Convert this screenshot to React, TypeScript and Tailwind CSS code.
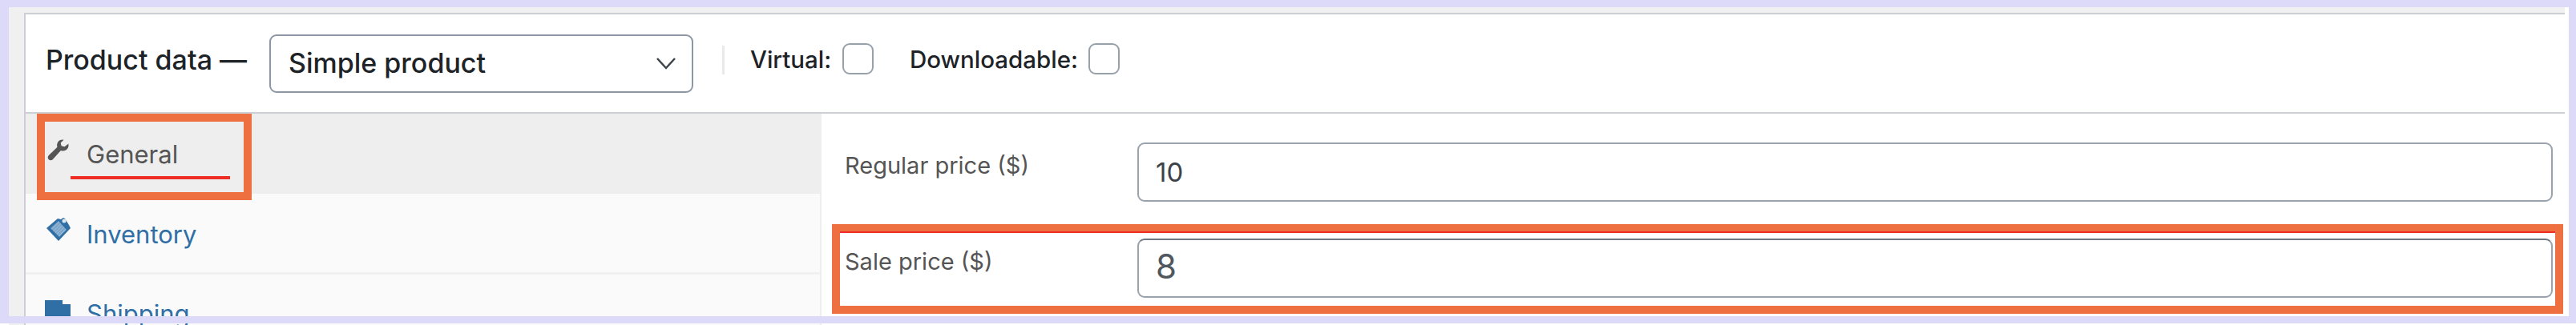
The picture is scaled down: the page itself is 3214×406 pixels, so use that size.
const sideRowText = "text-[31px] leading-none";

function WrenchIcon() {
  return (
    <svg width="28" height="28" viewBox="0 0 28 28" className="shrink-0">
      <path
        d="M27.500 6.500c.4 3.200-1 5.900-3.700 7.300-2 1-4.100 1-5.900.2L8 25c-1.400 1.500-3.800 1.600-5.200.2-1.500-1.400-1.400-3.800.1-5.200L13.500 9.700c-.7-2.100-.5-4.200.6-6C15.600 1.300 18.500.1 21.500.7l-3.800 3.900.9 3.700 3.900 1 5-3.800z"
        fill="#555"
      />
    </svg>
  );
}

function TagIcon() {
  return (
    <svg width="32" height="32" viewBox="0 0 32 32" className="shrink-0">
      <defs>
        <pattern id="tag-grid" width="3" height="3" patternUnits="userSpaceOnUse" patternTransform="rotate(45)">
          <rect width="3" height="3" fill="#8fb3d3" />
          <rect width="1" height="3" fill="#6f9cc4" />
        </pattern>
      </defs>
      <path d="M1 15L15 3l4 1 3-2 2 1 5 8 2 4-15 16z" fill="#2f6fa5" />
      <path d="M6 15l10-9 10 11-9 9z" fill="url(#tag-grid)" />
      <circle cx="23" cy="6" r="2.500" fill="#dbe7f1" />
    </svg>
  );
}

function BoxIcon() {
  return (
    <svg width="32" height="32" viewBox="0 0 32 32" className="shrink-0">
      <path d="M0 0h22v5h10v24H0z" fill="#2f6fa5" />
    </svg>
  );
}

function Checkbox() {
  return <span className="block h-[39px] w-[39px] shrink-0 rounded-[9px] border-2 border-[#98a1aa] bg-white" />;
}

function PriceRow({ label, value, large }: { label: string; value: string; large?: boolean }) {
  return (
    <div className="flex items-start">
      <label className="w-[365px] shrink-0 pt-[9px] text-[29px] leading-[40px] text-[#555]">{label}</label>
      <input
        readOnly
        value={value}
        className={
          large
            ? "h-[74px] flex-1 rounded-[9px] border-2 border-[#9aa3ad] border-t-[#6d7883] bg-white px-[21px] pb-[6px] text-[42px] text-[#50575e] outline-none"
            : "h-[74px] flex-1 rounded-[9px] border-2 border-[#9aa3ad] bg-white px-[21px] text-[33px] text-[#3c434a] outline-none"
        }
      />
    </div>
  );
}

export default function App() {
  return (
    <div className="relative h-[406px] w-[3214px] overflow-hidden bg-white font-['Inter',sans-serif]">
      <div className="h-[9px] bg-[#dcdaf8]" />
      <div className="flex h-[397px]">
        <div className="h-[386px] w-[11px] shrink-0 bg-[#dcdaf8]" />
        <div className="flex-1 bg-[#f0f0f0] pl-[19px] pt-[7px]">
          <div className="h-full border-l-2 border-t-2 border-[#ccd0d4] bg-white">
            {/* header */}
            <div className="flex h-[124px] items-center border-b-2 border-[#ccd0d4] pl-[25px]">
              <span className="mb-[8px] w-[279px] shrink-0 text-[34px] font-medium leading-none text-[#1d2327]">Product data —</span>
              <div className="flex h-[73px] w-[529px] shrink-0 items-center justify-between rounded-[9px] border-2 border-[#8c97a3] pl-[22px] pr-[19px]">
                <span className="text-[34px] font-medium leading-none text-[#1d2327]">Simple product</span>
                <svg width="26" height="16" viewBox="0 0 26 16" fill="none">
                  <path d="M2 2l11 12L24 2" stroke="#3c434a" strokeWidth="2.500" />
                </svg>
              </div>
              <div className="mb-[9px] ml-[36px] h-[36px] w-[3px] bg-[#e8e9eb]" />
              <div className="mb-[12px] ml-[32px] flex w-[154px] shrink-0 items-center justify-between text-[29.5px] font-medium leading-none text-[#1d2327]">
                <span className="pt-[4px]">Virtual:</span>
                <Checkbox />
              </div>
              <div className="mb-[12px] ml-[45px] flex w-[262px] shrink-0 items-center justify-between text-[29.5px] font-medium leading-none text-[#1d2327]">
                <span className="pt-[4px]">Downloadable:</span>
                <Checkbox />
              </div>
            </div>

            {/* body */}
            <div className="flex">
              <div className="w-[993px] shrink-0 border-r-2 border-[#eeeeee] bg-[#fafafa]">
                <div className={`flex h-[100px] items-start gap-[22px] bg-[#eeeeee] pl-[26px] pt-[32px] text-[#555] ${sideRowText}`}>
                  <WrenchIcon />
                  <span className="pt-[3px]">General</span>
                </div>
                <div className={`flex h-[101px] items-start gap-[19px] border-b-[3px] border-[#f1f1f1] pl-[25px] pt-[28px] text-[#2f6fa5] ${sideRowText}`}>
                  <TagIcon />
                  <span className="pt-[7px]">Inventory</span>
                </div>
                <div className={`flex items-start gap-[20px] pl-[24px] pt-[32px] text-[#2f6fa5] ${sideRowText}`}>
                  <BoxIcon />
                  <span className="pt-[1px]">Shipping</span>
                </div>
              </div>
              <div className="flex flex-1 flex-col gap-[46px] pl-[29px] pr-[15px] pt-[36px]">
                <PriceRow label="Regular price ($)" value="10" />
                <PriceRow label="Sale price ($)" value="8" large />
              </div>
            </div>
          </div>
        </div>
        <div className="w-[5px] shrink-0 bg-white" />
        <div className="h-[386px] w-[9px] shrink-0 bg-[#dcdaf8]" />
      </div>

      {/* annotations over the screenshot */}
      <div className="absolute left-0 right-0 top-[395px] h-[9px] bg-[#dcdaf8]" />
      <div className="absolute left-[46px] top-[142px] h-[108px] w-[268px] border-[10px] border-[#ee7040]" />
      <div className="absolute left-[88px] top-[220px] h-[4px] w-[199px] bg-[#ee2e24]" />
      <div className="absolute left-[1038px] top-[280px] h-[112px] w-[2160px] border-[10px] border-[#ee7040]" />
      <div className="absolute left-[1048px] top-[289px] h-[2px] w-[2140px] bg-[#ee2e24]" />
    </div>
  );
}
